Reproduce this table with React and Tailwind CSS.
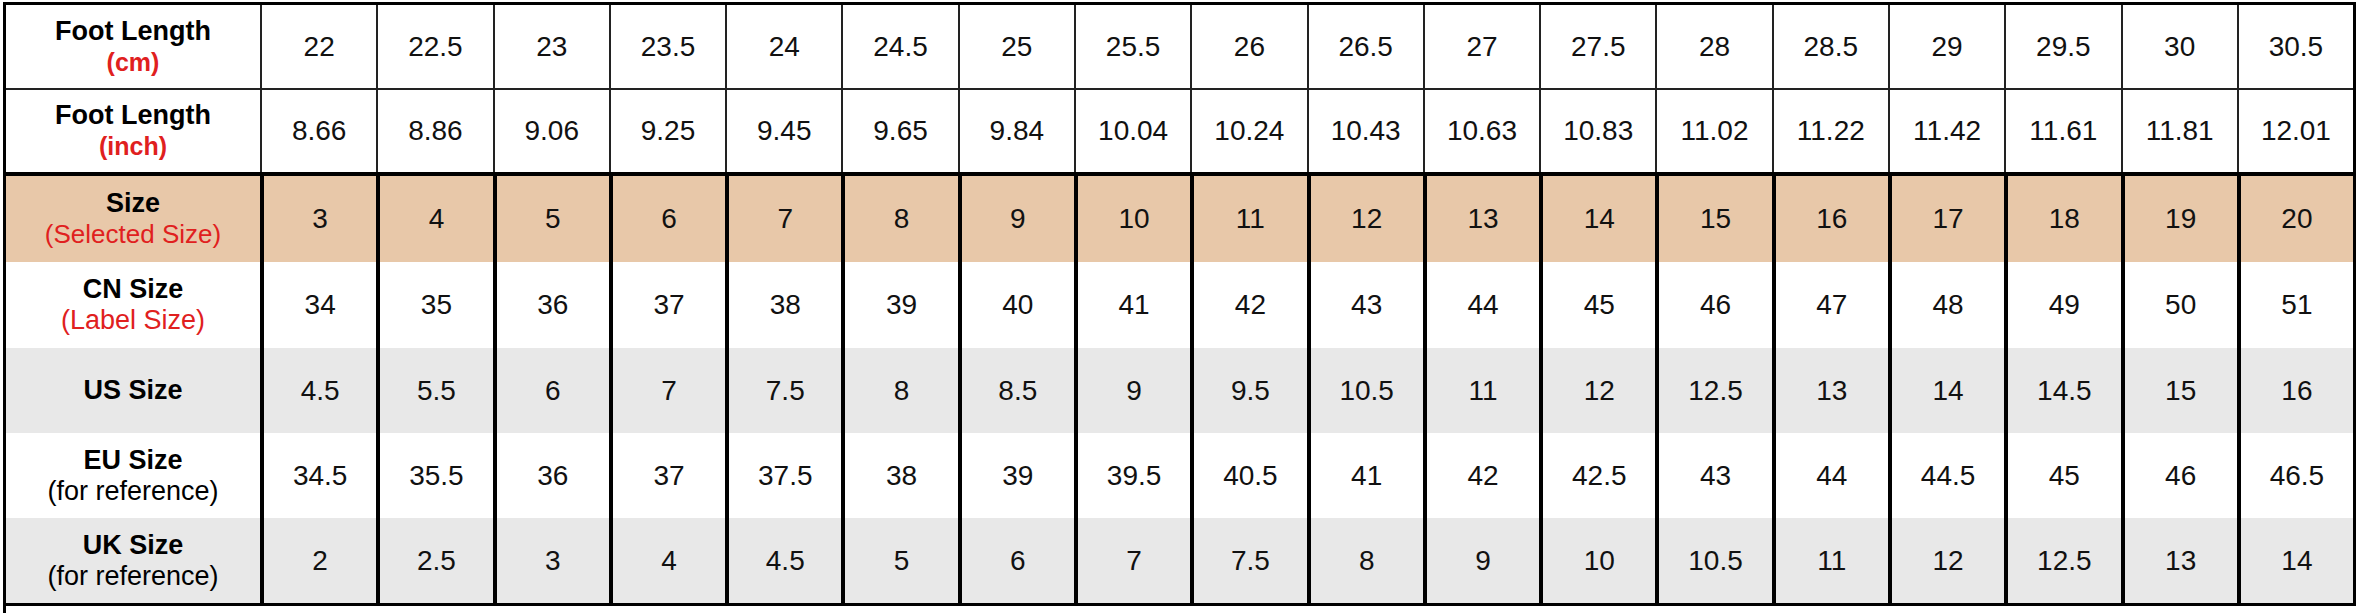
const cm = ['22', '22.5', '23', '23.5', '24', '24.5', '25', '25.5', '26', '26.5', '27', '27.5', '28', '28.5', '29', '29.5', '30', '30.5'];
const inch = ['8.66', '8.86', '9.06', '9.25', '9.45', '9.65', '9.84', '10.04', '10.24', '10.43', '10.63', '10.83', '11.02', '11.22', '11.42', '11.61', '11.81', '12.01'];
const size = ['3', '4', '5', '6', '7', '8', '9', '10', '11', '12', '13', '14', '15', '16', '17', '18', '19', '20'];
const cn = ['34', '35', '36', '37', '38', '39', '40', '41', '42', '43', '44', '45', '46', '47', '48', '49', '50', '51'];
const us = ['4.5', '5.5', '6', '7', '7.5', '8', '8.5', '9', '9.5', '10.5', '11', '12', '12.5', '13', '14', '14.5', '15', '16'];
const eu = ['34.5', '35.5', '36', '37', '37.5', '38', '39', '39.5', '40.5', '41', '42', '42.5', '43', '44', '44.5', '45', '46', '46.5'];
const uk = ['2', '2.5', '3', '4', '4.5', '5', '6', '7', '7.5', '8', '9', '10', '10.5', '11', '12', '12.5', '13', '14'];

const rows = [
  { title: 'Foot Length', sub: '(cm)', subClass: 'text-[25px] font-bold text-[#e0201e]', values: cm, bg: 'bg-white', h: 'h-[85px] border-b-2 border-[#222]', thin: true },
  { title: 'Foot Length', sub: '(inch)', subClass: 'text-[25px] font-bold text-[#e0201e]', values: inch, bg: 'bg-white', h: 'h-[86px] border-b-4 border-black', thin: true },
  { title: 'Size', sub: '(Selected Size)', subClass: 'text-[26px] text-[#e0201e]', values: size, bg: 'bg-[#e8c8a9]', h: 'h-[86px]' },
  { title: 'CN Size', sub: '(Label Size)', subClass: 'text-[27px] text-[#e0201e]', values: cn, bg: 'bg-white', h: 'h-[86px]' },
  { title: 'US Size', values: us, bg: 'bg-[#e8e8e8]', h: 'h-[85px]' },
  { title: 'EU Size', sub: '(for reference)', subClass: 'text-[27px] text-black', values: eu, bg: 'bg-white', h: 'h-[85px]' },
  { title: 'UK Size', sub: '(for reference)', subClass: 'text-[27px] text-black', values: uk, bg: 'bg-[#e8e8e8]', h: 'h-[85px]' },
];

function Row({ row }) {
  return (
    <div className={`flex ${row.bg} ${row.h}`}>
      {/* label column */}
      <div className="w-[254px] shrink-0 flex flex-col items-center justify-center leading-[31px]">
        <span className="text-[27px] font-bold text-black">{row.title}</span>
        {row.sub && <span className={row.subClass}>{row.sub}</span>}
      </div>
      {row.values.map((v, i) => (
        <div
          key={i}
          className={`flex-1 flex items-center justify-center text-[28px] text-[#111] ${row.thin ? 'border-l-2 border-[#222]' : 'border-l-4 border-black'}`}
        >
          {v}
        </div>
      ))}
    </div>
  );
}

export default function App() {
  return (
    <div className="bg-white w-[2357px] h-[613px] pt-[2px] pl-[3px]" style={{ fontFamily: '"Liberation Sans", Arial, sans-serif' }}>
      <div className="border-l-[3px] border-black h-full w-[2353px]">
        <div className="border-t-[3px] border-r-[3px] border-b-[3px] border-black">
          {rows.map((row, i) => (
            <Row key={i} row={row} />
          ))}
        </div>
      </div>
    </div>
  );
}
